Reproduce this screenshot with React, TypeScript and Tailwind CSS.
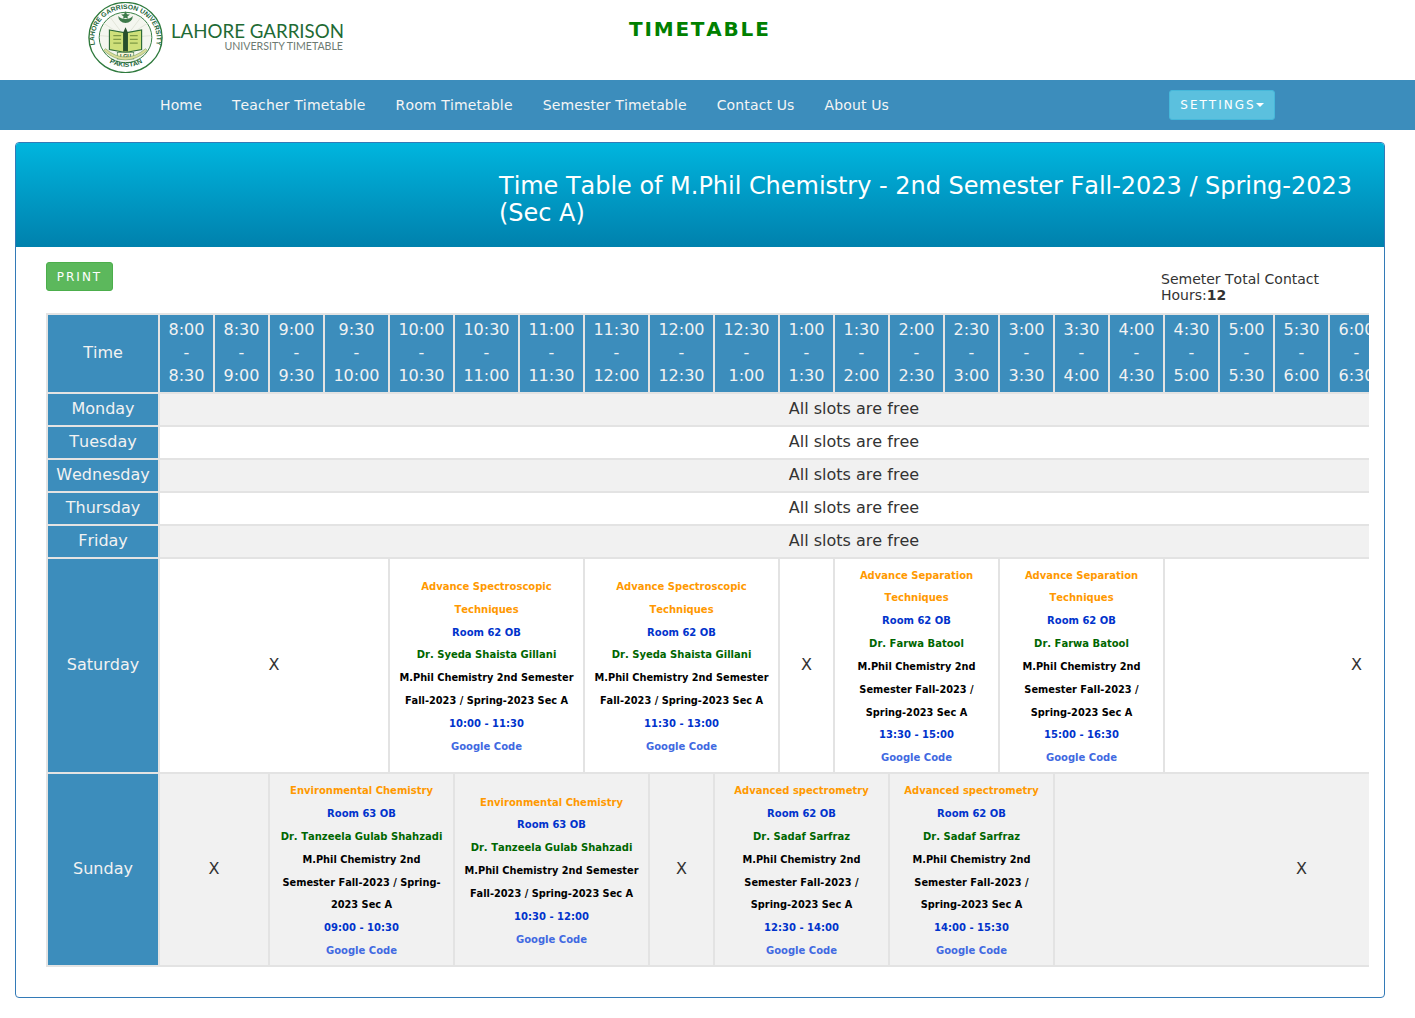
const hourCols = [
  'w-[55px]', 'w-[55px]', 'w-[55px]', 'w-[65px]', 'w-[65px]', 'w-[65px]', 'w-[65px]', 'w-[65px]',
  'w-[65px]', 'w-[65px]', 'w-[55px]', 'w-[55px]', 'w-[55px]', 'w-[55px]', 'w-[55px]', 'w-[55px]',
  'w-[55px]', 'w-[55px]', 'w-[55px]', 'w-[55px]', 'w-[55px]', 'w-[55px]', 'w-[55px]', 'w-[55px]',
];

const slots = [
  ['8:00', '8:30'], ['8:30', '9:00'], ['9:00', '9:30'], ['9:30', '10:00'], ['10:00', '10:30'], ['10:30', '11:00'],
  ['11:00', '11:30'], ['11:30', '12:00'], ['12:00', '12:30'], ['12:30', '1:00'], ['1:00', '1:30'], ['1:30', '2:00'],
  ['2:00', '2:30'], ['2:30', '3:00'], ['3:00', '3:30'], ['3:30', '4:00'], ['4:00', '4:30'], ['4:30', '5:00'],
  ['5:00', '5:30'], ['5:30', '6:00'], ['6:00', '6:30'], ['6:30', '7:00'], ['7:00', '7:30'], ['7:30', '8:00'],
];

const navItems = ['Home', 'Teacher Timetable', 'Room Timetable', 'Semester Timetable', 'Contact Us', 'About Us'];

const semester = 'M.Phil Chemistry 2nd Semester Fall-2023 / Spring-2023 Sec A';

type Cell =
  | { span: number }
  | { span: number; course: string; room: string; teacher: string; time: string };

const saturday: Cell[] = [
  { span: 4 },
  { span: 3, course: 'Advance Spectroscopic Techniques', room: 'Room 62 OB', teacher: 'Dr. Syeda Shaista Gillani', time: '10:00 - 11:30' },
  { span: 3, course: 'Advance Spectroscopic Techniques', room: 'Room 62 OB', teacher: 'Dr. Syeda Shaista Gillani', time: '11:30 - 13:00' },
  { span: 1 },
  { span: 3, course: 'Advance Separation Techniques', room: 'Room 62 OB', teacher: 'Dr. Farwa Batool', time: '13:30 - 15:00' },
  { span: 3, course: 'Advance Separation Techniques', room: 'Room 62 OB', teacher: 'Dr. Farwa Batool', time: '15:00 - 16:30' },
  { span: 7 },
];

const sunday: Cell[] = [
  { span: 2 },
  { span: 3, course: 'Environmental Chemistry', room: 'Room 63 OB', teacher: 'Dr. Tanzeela Gulab Shahzadi', time: '09:00 - 10:30' },
  { span: 3, course: 'Environmental Chemistry', room: 'Room 63 OB', teacher: 'Dr. Tanzeela Gulab Shahzadi', time: '10:30 - 12:00' },
  { span: 1 },
  { span: 3, course: 'Advanced spectrometry', room: 'Room 62 OB', teacher: 'Dr. Sadaf Sarfraz', time: '12:30 - 14:00' },
  { span: 3, course: 'Advanced spectrometry', room: 'Room 62 OB', teacher: 'Dr. Sadaf Sarfraz', time: '14:00 - 15:30' },
  { span: 9 },
];

const Emblem = () => (
  <svg width="78" height="71" viewBox="0 0 80 76" preserveAspectRatio="none" className="shrink-0">
    <defs>
      <path id="arcTop" d="M 10 52 A 32 32 0 1 1 69 52" />
      <path id="arcBottom" d="M 19 62 A 33 33 0 0 0 61 62" />
    </defs>
    <circle cx="39.5" cy="38" r="37.5" fill="#fff" stroke="#2f7a3d" strokeWidth="1.4" />
    <circle cx="39.5" cy="38" r="27" fill="#f4f6ef" stroke="#2f7a3d" strokeWidth="1" />
    <g stroke="#d5d8c8" strokeWidth="0.6">
      <path d="M39.5 38 L16 22 M39.5 38 L22 14 M39.5 38 L63 22 M39.5 38 L57 14 M39.5 38 L13 36 M39.5 38 L66 36" />
    </g>
    <text fontFamily="Liberation Sans, sans-serif" fontSize="7" fontWeight="700" fill="#24663a">
      <textPath href="#arcTop" startOffset="50%" textAnchor="middle">LAHORE GARRISON UNIVERSITY</textPath>
    </text>
    <text fontFamily="Liberation Sans, sans-serif" fontSize="7" fontWeight="700" fill="#24663a">
      <textPath href="#arcBottom" startOffset="50%" textAnchor="middle">PAKISTAN</textPath>
    </text>
    <path d="M32 15 A7.5 7.5 0 0 0 47 15 A8.5 6 0 0 1 32 15 Z" fill="#3d7a4a" />
    <path d="M39.5 10 L41 13 L44 13.5 L41.5 15.5 L42 18 L39.5 16.8 L37 18 L37.5 15.5 L35 13.5 L38 13 Z" fill="#3d7a4a" />
    <path d="M23 30 L39.5 33 L56 30 L56 51 L39.5 54 L23 51 Z" fill="#cfe07a" stroke="#2d6b37" strokeWidth="1.2" />
    <path d="M39.5 27 L37 33 L37 53 L42 53 L42 33 Z" fill="#274f2c" />
    <path d="M27 36 H35 M27 40 H35 M27 44 H35 M44 36 H52 M44 40 H52 M44 44 H52" stroke="#7f9a46" strokeWidth="1.2" />
    <rect x="31" y="54" width="17" height="7" fill="#f8f6d8" stroke="#2d6b37" strokeWidth="0.6" />
    <text x="39.5" y="59.8" textAnchor="middle" fontFamily="Liberation Sans, sans-serif" fontSize="5.4" fontWeight="700" fill="#1c4d28">LGU</text>
    <path d="M17 52 Q39.5 72 62 52 L60 50 Q39.5 68 19 50 Z" fill="#d9dc9a" stroke="#5f8f4f" strokeWidth="0.5" />
  </svg>
);

// small text sits on the cell's 16px line box, like inline spans would
const ClassBlock = ({ course, room, teacher, time }: { course: string; room: string; teacher: string; time: string }) => (
  <div className="px-1 font-bold">
    <div><span className="text-[10px] text-[#ff9900]">{course}</span></div>
    <div><span className="text-[10px] text-[#0033cc]">{room}</span></div>
    <div><span className="text-[10px] text-[#006600]">{teacher}</span></div>
    <div><span className="text-[9.8px] text-black">{semester}</span></div>
    <div><span className="text-[10px] text-[#0033cc]">{time}</span></div>
    <div><span className="text-[10px] text-[#4169e1]">Google Code</span></div>
  </div>
);

const DayHead = ({ name }: { name: string }) => (
  <td className="border-2 border-[#e3e3e3] bg-[#3c8dbc] p-1 text-center text-[#f2f2f2]">{name}</td>
);

const SlotRow = ({ day, cells, shaded }: { day: string; cells: Cell[]; shaded: boolean }) => (
  <tr className={shaded ? 'bg-[#f1f1f1]' : 'bg-white'}>
    <DayHead name={day} />
    {cells.map((cell, i) => (
      <td key={i} colSpan={cell.span} className="border-2 border-[#e3e3e3] p-1 text-center align-middle">
        {'course' in cell ? <ClassBlock {...cell} /> : 'X'}
      </td>
    ))}
  </tr>
);

export default function App() {
  return (
    <div className="min-h-[1018px] bg-white font-['DejaVu_Sans',sans-serif] text-[14px] text-[#333] [font-kerning:none]">
      {/* Logo and title */}
      <header className="flex h-20 items-start">
        <div className="ml-[87px] mt-[2px] flex w-[542px] items-start">
          <Emblem />
          <div className="ml-[6px] mt-[19px] w-[172px] text-right font-['Lato',sans-serif] [font-kerning:normal]">
            <div className="whitespace-nowrap text-[18.7px] leading-[20px] text-[#1f6b35]">LAHORE GARRISON</div>
            <div className="whitespace-nowrap text-[10.6px] leading-[11px] text-[#6d7a72]">UNIVERSITY TIMETABLE</div>
          </div>
        </div>
        <h1 className="mt-[18px] text-[20px] leading-[22px] font-bold tracking-[1.8px] text-[#008000]">TIMETABLE</h1>
      </header>

      {/* Navigation */}
      <nav className="flex h-[50px] items-center bg-[#3c8dbc] pl-[145px] pr-[140px] text-[#f5f5f5]">
        <ul className="flex flex-1">
          {navItems.map((item) => (
            <li key={item} className="px-[15px] tracking-[0.14px]">{item}</li>
          ))}
        </ul>
        <button className="flex h-[30px] w-[106px] items-center justify-center rounded-[3px] border border-[#46b8da] bg-[#5bc0de] text-[12px] tracking-[2px] text-white">
          SETTINGS
          <span className="h-0 w-0 border-x-4 border-t-4 border-x-transparent border-t-white" />
        </button>
      </nav>

      {/* Timetable panel */}
      <main className="ml-[15px] mr-[30px] mt-3 overflow-hidden rounded border border-[#337ab7] bg-white">
        <div className="h-[104px] bg-gradient-to-b from-[#00b5de] to-[#0081ad] pl-[483px] pr-4 pt-[30px] text-[24px] leading-[27px] tracking-[-0.03px] text-white">
          Time Table of M.Phil Chemistry - 2nd Semester Fall-2023 / Spring-2023 (Sec A)
        </div>
        <div className="pb-[30px] pl-[30px] pr-[15px] pt-[15px]">
          <div className="flex h-[51px] items-start justify-between">
            <button className="h-[29px] w-[67px] rounded-[3px] border border-[#4cae4c] bg-[#5cb85c] text-[12px] tracking-[2px] text-white">PRINT</button>
            <p className="mr-[26px] mt-[9px] w-[182px] leading-4">
              Semeter Total Contact Hours:<b>12</b>
            </p>
          </div>
          <div className="overflow-hidden">
            <table className="w-[1502px] table-fixed border-collapse text-[16px] leading-[1.42857]">
              <colgroup>
                <col className="w-[112px]" />
                {hourCols.map((w, i) => (
                  <col key={i} className={w} />
                ))}
              </colgroup>
              <tbody>
                <tr>
                  <DayHead name="Time" />
                  {slots.map(([from, to]) => (
                    <td key={from} className="whitespace-nowrap border-2 border-[#e3e3e3] bg-[#3c8dbc] p-1 text-center text-[#f2f2f2]">
                      {from}<br />-<br />{to}
                    </td>
                  ))}
                </tr>
                {['Monday', 'Tuesday', 'Wednesday', 'Thursday', 'Friday'].map((day, i) => (
                  <tr key={day} className={i % 2 === 0 ? 'h-[33px] bg-[#f1f1f1]' : 'h-[33px] bg-white'}>
                    <DayHead name={day} />
                    <td colSpan={24} className="border-2 border-[#e3e3e3] p-1 text-center">All slots are free</td>
                  </tr>
                ))}
                <SlotRow day="Saturday" cells={saturday} shaded={false} />
                <SlotRow day="Sunday" cells={sunday} shaded />
              </tbody>
            </table>
          </div>
        </div>
      </main>
    </div>
  );
}
